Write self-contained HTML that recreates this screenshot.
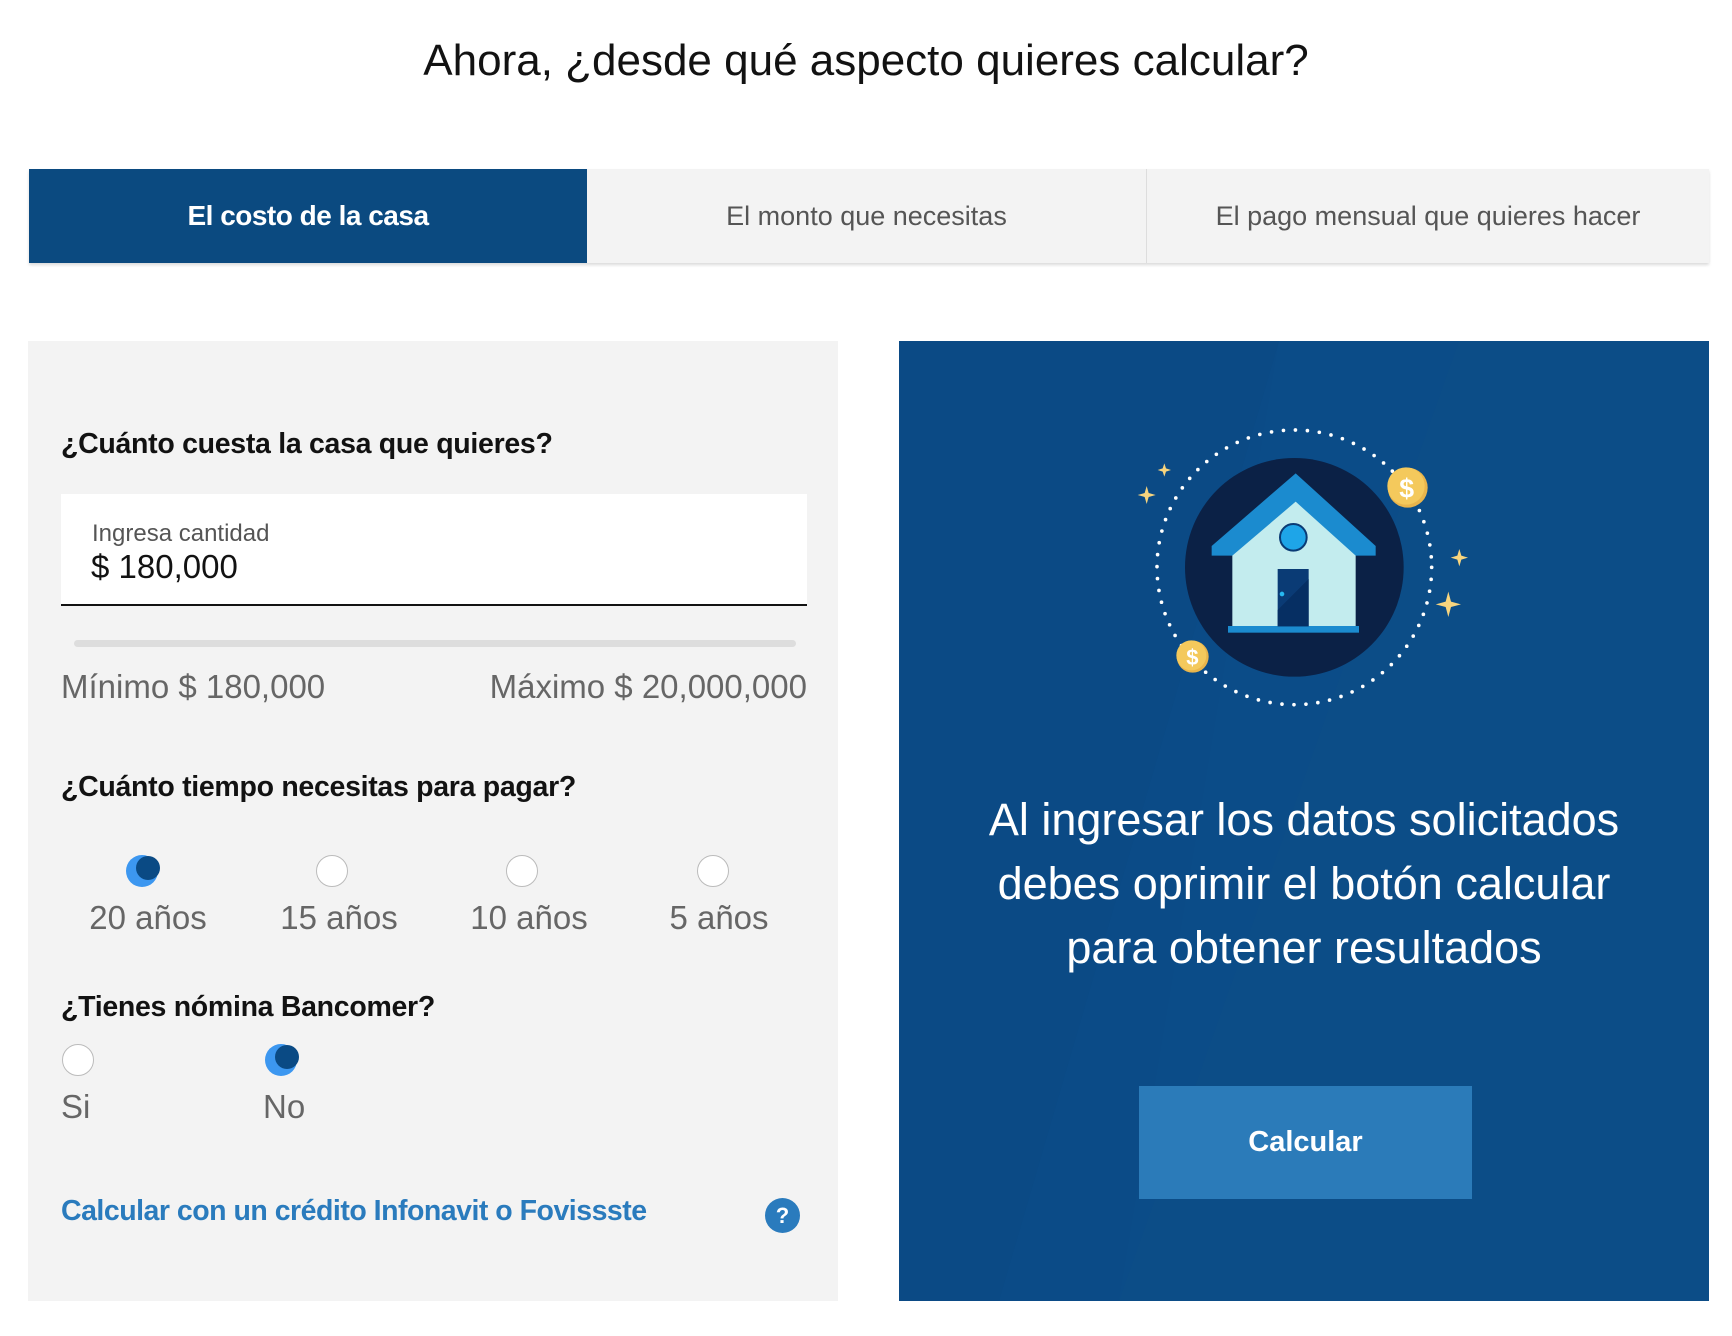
<!DOCTYPE html>
<html><head><meta charset="utf-8"><style>
*{margin:0;padding:0;box-sizing:border-box}
body{width:1732px;height:1336px;background:#fff;font-family:"Liberation Sans",sans-serif;position:relative;overflow:hidden;color:#121212}
.a{position:absolute;white-space:nowrap}
.title{left:0;width:1732px;text-align:center;top:36px;font-size:44px;color:#121212}
.tabs{position:absolute;left:29px;top:169px;width:1680px;height:94px;display:flex;box-shadow:0 2px 3px rgba(0,0,0,.15);background:#f3f3f3}
.tab{display:flex;align-items:center;justify-content:center;font-size:27px;color:#555;height:100%}
.t1{width:558px;background:#0b4a80;color:#fff;font-weight:bold;letter-spacing:-0.5px;font-size:28px}
.t2{width:560px;border-right:1px solid #ddd}
.t3{flex:1}
.left{position:absolute;left:28px;top:341px;width:810px;height:960px;background:#f3f3f3}
.right{position:absolute;left:899px;top:341px;width:810px;height:960px;background:#0b4a85;overflow:hidden}
.q{font-weight:bold;font-size:28.5px;color:#121212;letter-spacing:-0.3px}
.g{color:#666}
.rad{position:absolute;width:32px;height:32px;border-radius:50%;background:#fff;border:1.5px solid #bbb}
.on{border:none;background:#3c97f0}
.on::after{content:"";position:absolute;left:10px;top:1px;width:24px;height:24px;border-radius:50%;background:#0a4a84}
</style></head><body>
<div class="a title">Ahora, ¿desde qué aspecto quieres calcular?</div>
<div class="tabs"><div class="tab t1">El costo de la casa</div><div class="tab t2">El monto que necesitas</div><div class="tab t3">El pago mensual que quieres hacer</div></div>

<div class="left"></div>
<div class="a q" style="left:61px;top:428px">¿Cuánto cuesta la casa que quieres?</div>
<div class="a" style="left:61px;top:494px;width:746px;height:112px;background:#fff;border-bottom:2px solid #121212"></div>
<div class="a" style="left:92px;top:520px;font-size:24px;color:#555">Ingresa cantidad</div>
<div class="a" style="left:91px;top:548px;font-size:33px;color:#121212">$ 180,000</div>
<div class="a" style="left:74px;top:640px;width:722px;height:7px;border-radius:4px;background:#ddd"></div>
<div class="a g" style="left:61px;top:668px;font-size:33px">Mínimo $ 180,000</div>
<div class="a g" style="right:925px;top:668px;font-size:33px">Máximo $ 20,000,000</div>
<div class="a q" style="left:61px;top:771px">¿Cuánto tiempo necesitas para pagar?</div>
<div class="rad on" style="left:126px;top:855px"></div>
<div class="rad" style="left:316px;top:855px"></div>
<div class="rad" style="left:506px;top:855px"></div>
<div class="rad" style="left:697px;top:855px"></div>
<div class="a g" style="left:88px;width:120px;text-align:center;top:899px;font-size:33px">20 años</div>
<div class="a g" style="left:279px;width:120px;text-align:center;top:899px;font-size:33px">15 años</div>
<div class="a g" style="left:469px;width:120px;text-align:center;top:899px;font-size:33px">10 años</div>
<div class="a g" style="left:659px;width:120px;text-align:center;top:899px;font-size:33px">5 años</div>
<div class="a q" style="left:61px;top:991px">¿Tienes nómina Bancomer?</div>
<div class="rad" style="left:62px;top:1044px"></div>
<div class="rad on" style="left:265px;top:1044px"></div>
<div class="a g" style="left:61px;top:1088px;font-size:33px">Si</div>
<div class="a g" style="left:263px;top:1088px;font-size:33px">No</div>
<div class="a q" style="left:61px;top:1195px;color:#2a7bbd;letter-spacing:-0.5px">Calcular con un crédito Infonavit o Fovissste</div>
<div class="a" style="left:765px;top:1198px;width:35px;height:35px;border-radius:50%;background:#2a7bbd;color:#fff;font-weight:bold;font-size:22px;text-align:center;line-height:35px">?</div>

<div class="right">
<svg width="810" height="960" style="position:absolute;left:0;top:0"><polygon points="560,0 810,0 810,960 220,960 380,0" fill="#0e5089" opacity=".5"/><polygon points="380,0 560,0 220,960 100,960" fill="#0c4d88" opacity=".6"/></svg>
</div>
<svg class="a" style="left:1100px;top:380px" width="420" height="350" viewBox="0 0 1260 1050">
<circle cx="583" cy="562" r="412" fill="none" stroke="#fff" stroke-width="11" stroke-linecap="round" stroke-dasharray="0 36"/>
<circle cx="583" cy="562" r="328" fill="#0b2146"/>
<path d="M335,527 L335,498 L587,280 L827,498 L827,527 Z" fill="#1b8bcf"/>
<path d="M397,527 L587,365 L767,527 L767,740 L397,740 Z" fill="#c3ecee"/>
<rect x="384" y="738" width="393" height="20" fill="#1b8bcf"/>
<rect x="533" y="567" width="93" height="172" fill="#0a3b75"/>
<path d="M533,690 L626,597 L626,739 L533,739Z" fill="#062f63"/>
<circle cx="546" cy="642" r="7" fill="#27b8f0"/>
<circle cx="580" cy="472" r="40" fill="#1ea5e8" stroke="#0a3b75" stroke-width="6"/>
<circle cx="923" cy="323" r="60" fill="#e9b54c"/><circle cx="918" cy="318" r="56" fill="#f4c95c"/>
<text x="920" y="352" font-size="80" font-weight="bold" fill="#fff" text-anchor="middle" font-family="Liberation Sans">$</text>
<circle cx="278" cy="830" r="48" fill="#e9b54c"/><circle cx="274" cy="826" r="45" fill="#f4c95c"/>
<text x="277" y="855" font-size="66" font-weight="bold" fill="#fff" text-anchor="middle" font-family="Liberation Sans">$</text>
<g fill="#f8d57e">
<path d="M193,250 L198,265 L213,270 L198,275 L193,290 L188,275 L173,270 L188,265Z"/>
<path d="M140,318 L146,339 L167,345 L146,351 L140,372 L134,351 L113,345 L134,339Z"/>
<path d="M1078,507 L1084,527 L1104,533 L1084,539 L1078,559 L1072,539 L1052,533 L1072,527Z"/>
<path d="M1045,635 L1053,665 L1083,673 L1053,681 L1045,711 L1037,681 L1007,673 L1037,665Z"/>
</g>
</svg>
<div class="a" style="left:899px;width:810px;text-align:center;top:788px;font-size:45px;color:#fff;line-height:64px;white-space:normal">Al ingresar los datos solicitados<br>debes oprimir el botón calcular<br>para obtener resultados</div>
<div class="a" style="left:1139px;top:1086px;width:333px;height:113px;background:#2b7bb9;color:#fff;font-weight:bold;font-size:29px;display:flex;align-items:center;justify-content:center">Calcular</div>
</body></html>
